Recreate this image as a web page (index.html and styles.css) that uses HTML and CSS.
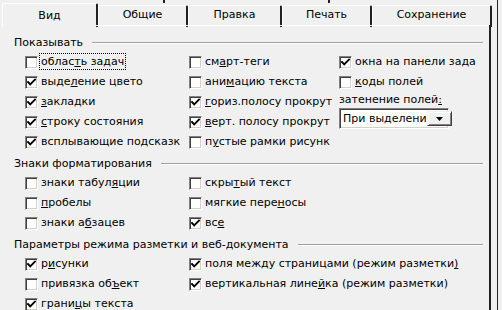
FILE: index.html
```html
<!DOCTYPE html>
<html lang="ru">
<head>
<meta charset="utf-8">
<title>Параметры</title>
<link rel="stylesheet" href="styles.css">
</head>
<body>
<div class="frame">
  <div class="backrow">
    <div class="bt bt1"></div>
    <div class="bt bt2"></div>
    <div class="bt bt3"></div>
  </div>
  <div class="tabs">
    <div class="tab sel w1">Вид</div>
    <div class="tab w2">Общие</div>
    <div class="tab w3">Правка</div>
    <div class="tab w4">Печать</div>
    <div class="tab w5">Сохранение</div>
  </div>
  <div class="panel">
    <section class="group">
      <div class="legend"><span>Показывать</span><i class="rule"></i></div>
      <div class="grid">
        <div class="item"><span class="cb"></span><span class="txt"><span class="focus">облас<u>т</u>ь задач</span></span></div>
        <div class="item"><span class="cb"></span><span class="txt">см<u>а</u>рт-теги</span></div>
        <div class="item"><span class="cb on"><svg viewBox="0 0 11 11"><path d="M2 5 L4.2 7.3 L9 2.5"/></svg></span><span class="txt">окна на панели зада</span></div>

        <div class="item"><span class="cb on"><svg viewBox="0 0 11 11"><path d="M2 5 L4.2 7.3 L9 2.5"/></svg></span><span class="txt">выде<u>л</u>ение цвето</span></div>
        <div class="item"><span class="cb"></span><span class="txt">ани<u>м</u>ацию текста</span></div>
        <div class="item"><span class="cb"></span><span class="txt"><u>к</u>оды полей</span></div>

        <div class="item"><span class="cb on"><svg viewBox="0 0 11 11"><path d="M2 5 L4.2 7.3 L9 2.5"/></svg></span><span class="txt"><u>з</u>акладки</span></div>
        <div class="item"><span class="cb on"><svg viewBox="0 0 11 11"><path d="M2 5 L4.2 7.3 L9 2.5"/></svg></span><span class="txt"><u>г</u>ориз.полосу прокрут</span></div>
        <div class="shade">
          <div class="shade-label">затенение полей<u>:</u></div>
          <div class="select"><span class="sel-text">При выделени</span><span class="btn"><svg viewBox="0 0 7 4"><path d="M0 0 H7 L3.5 4 Z"/></svg></span></div>
        </div>

        <div class="item"><span class="cb on"><svg viewBox="0 0 11 11"><path d="M2 5 L4.2 7.3 L9 2.5"/></svg></span><span class="txt"><u>с</u>троку состояния</span></div>
        <div class="item"><span class="cb on"><svg viewBox="0 0 11 11"><path d="M2 5 L4.2 7.3 L9 2.5"/></svg></span><span class="txt"><u>в</u>ерт. полосу прокрут</span></div>

        <div class="item"><span class="cb on"><svg viewBox="0 0 11 11"><path d="M2 5 L4.2 7.3 L9 2.5"/></svg></span><span class="txt">всплывающие подсказк</span></div>
        <div class="item"><span class="cb"></span><span class="txt">п<u>у</u>стые рамки рисунк</span></div>
      </div>
    </section>

    <section class="group">
      <div class="legend"><span>Знаки форматирования</span><i class="rule"></i></div>
      <div class="grid">
        <div class="item"><span class="cb"></span><span class="txt">знаки табул<u>я</u>ции</span></div>
        <div class="item"><span class="cb"></span><span class="txt">скры<u>т</u>ый текст</span></div>
        <div class="item empty"></div>

        <div class="item"><span class="cb"></span><span class="txt"><u>п</u>робелы</span></div>
        <div class="item"><span class="cb"></span><span class="txt">мягкие пере<u>н</u>осы</span></div>
        <div class="item empty"></div>

        <div class="item"><span class="cb"></span><span class="txt">знаки а<u>б</u>зацев</span></div>
        <div class="item"><span class="cb on"><svg viewBox="0 0 11 11"><path d="M2 5 L4.2 7.3 L9 2.5"/></svg></span><span class="txt">вс<u>е</u></span></div>
      </div>
    </section>

    <section class="group">
      <div class="legend"><span>Параметры режима разметки и веб-документа</span><i class="rule"></i></div>
      <div class="grid">
        <div class="item"><span class="cb on"><svg viewBox="0 0 11 11"><path d="M2 5 L4.2 7.3 L9 2.5"/></svg></span><span class="txt">р<u>и</u>сунки</span></div>
        <div class="item wide"><span class="cb on"><svg viewBox="0 0 11 11"><path d="M2 5 L4.2 7.3 L9 2.5"/></svg></span><span class="txt">поля между страницами (режим разметки<u>)</u></span></div>

        <div class="item"><span class="cb"></span><span class="txt">привязка об<u>ъ</u>ект</span></div>
        <div class="item wide"><span class="cb on"><svg viewBox="0 0 11 11"><path d="M2 5 L4.2 7.3 L9 2.5"/></svg></span><span class="txt">вертикальная лине<u>й</u>ка (режим разметки)</span></div>

        <div class="item"><span class="cb on"><svg viewBox="0 0 11 11"><path d="M2 5 L4.2 7.3 L9 2.5"/></svg></span><span class="txt">грани<u>ц</u>ы текста</span></div>
      </div>
    </section>
  </div>
</div>
</body>
</html>
```

FILE: styles.css
```css
html, body {
  margin: 0;
  padding: 0;
  background: #f0f0f0;
}

body {
  width: 502px;
  height: 310px;
  overflow: hidden;
  font-family: "DejaVu Sans", "Noto Sans", sans-serif;
  font-size: 11px;
  color: #000;
}

u {
  text-decoration: underline;
  text-underline-offset: 1px;
}

.frame {
  width: 497px;
  height: 310px;
  border-right: 1px solid #202020;
}

/* back row of tabs (only the bottom edge is visible) */
.backrow {
  display: flex;
  height: 3px;
}

.bt {
  height: 3px;
  box-sizing: border-box;
  border-right: 2px solid #202020;
}

.bt1 { width: 165px; }
.bt2 { width: 165px; }
.bt3 { width: 0; border: 0; }

/* front row of tabs */
.tabs {
  display: flex;
  height: 22px;
}

.tab {
  box-sizing: border-box;
  height: 22px;
  margin-top: 2px;
  border-top: 1px solid #fff;
  border-left: 1px solid #fff;
  border-right: 2px solid #202020;
  border-radius: 2px 2px 0 0;
  text-align: center;
  line-height: 18px;
  padding-top: 0;
}

.tab.sel {
  margin-top: 0;
  height: 24px;
  margin-left: 2px;
  line-height: 20px;
  padding-top: 2px;
}

.w1 { width: 96px; }
.w2 { width: 90px; }
.w3 { width: 94px; }
.w4 { width: 90px; }
.w5 { width: 120px; }

/* panel */
.panel {
  width: 491px;
  box-sizing: border-box;
  border-right: 2px solid #202020;
  height: 285px;
  padding: 11px 0 0 14px;
  position: relative;
}

.panel::before {
  content: "";
  position: absolute;
  top: 0;
  left: 96px;
  right: 0;
  height: 1px;
  background: #fff;
}

.group {
  margin-bottom: 5px;
}

.legend {
  display: flex;
  align-items: center;
  height: 14px;
  line-height: 14px;
  margin-bottom: 2px;
  padding-right: 6px;
}

.rule {
  flex: 1;
  margin-left: 9px;
  margin-top: -1px;
  border-top: 1px solid #a0a0a0;
  border-bottom: 1px solid #fff;
  height: 0;
}

.grid {
  display: grid;
  grid-template-columns: 164px 150px 1fr;
  grid-auto-rows: 20px;
  padding-left: 11px;
}

.item {
  display: flex;
  align-items: center;
  white-space: nowrap;
}

.item.wide { grid-column: span 2; }

.cb {
  flex: none;
  width: 13px;
  height: 13px;
  box-sizing: border-box;
  background: #fff;
  border: 1px solid;
  border-color: #808080 #fff #fff #808080;
  box-shadow: inset 1px 1px 0 #404040, inset -1px -1px 0 #d4d0c8;
  display: flex;
  align-items: center;
  justify-content: center;
}

.cb svg {
  width: 11px;
  height: 11px;
  display: block;
}

.cb svg path {
  fill: none;
  stroke: #000;
  stroke-width: 1.9;
  stroke-linecap: square;
}

.txt {
  margin-left: 3px;
  line-height: 14px;
}

.focus {
  outline: 1px dotted #000;
  outline-offset: 1px;
}

.shade {
  grid-row: span 2;
  display: flex;
  flex-direction: column;
}

.shade-label {
  line-height: 14px;
  margin-top: 1px;
}

.select {
  margin-top: 1px;
  width: 110px;
  height: 21px;
  box-sizing: border-box;
  background: #fff;
  border: 1px solid;
  border-color: #808080 #fff #fff #808080;
  box-shadow: inset 1px 1px 0 #404040, inset -1px -1px 0 #d4d0c8;
  display: flex;
  align-items: stretch;
  padding: 2px;
}

.sel-text {
  flex: 1;
  white-space: nowrap;
  line-height: 15px;
  padding-left: 1px;
}

.btn {
  flex: none;
  width: 25px;
  box-sizing: border-box;
  background: #f0f0f0;
  border: 1px solid;
  border-color: #f0f0f0 #404040 #404040 #f0f0f0;
  box-shadow: inset 1px 1px 0 #fff, inset -1px -1px 0 #808080;
  display: flex;
  align-items: center;
  justify-content: center;
}

.btn svg {
  width: 7px;
  height: 4px;
  display: block;
}

.btn svg path {
  fill: #000;
}
```
